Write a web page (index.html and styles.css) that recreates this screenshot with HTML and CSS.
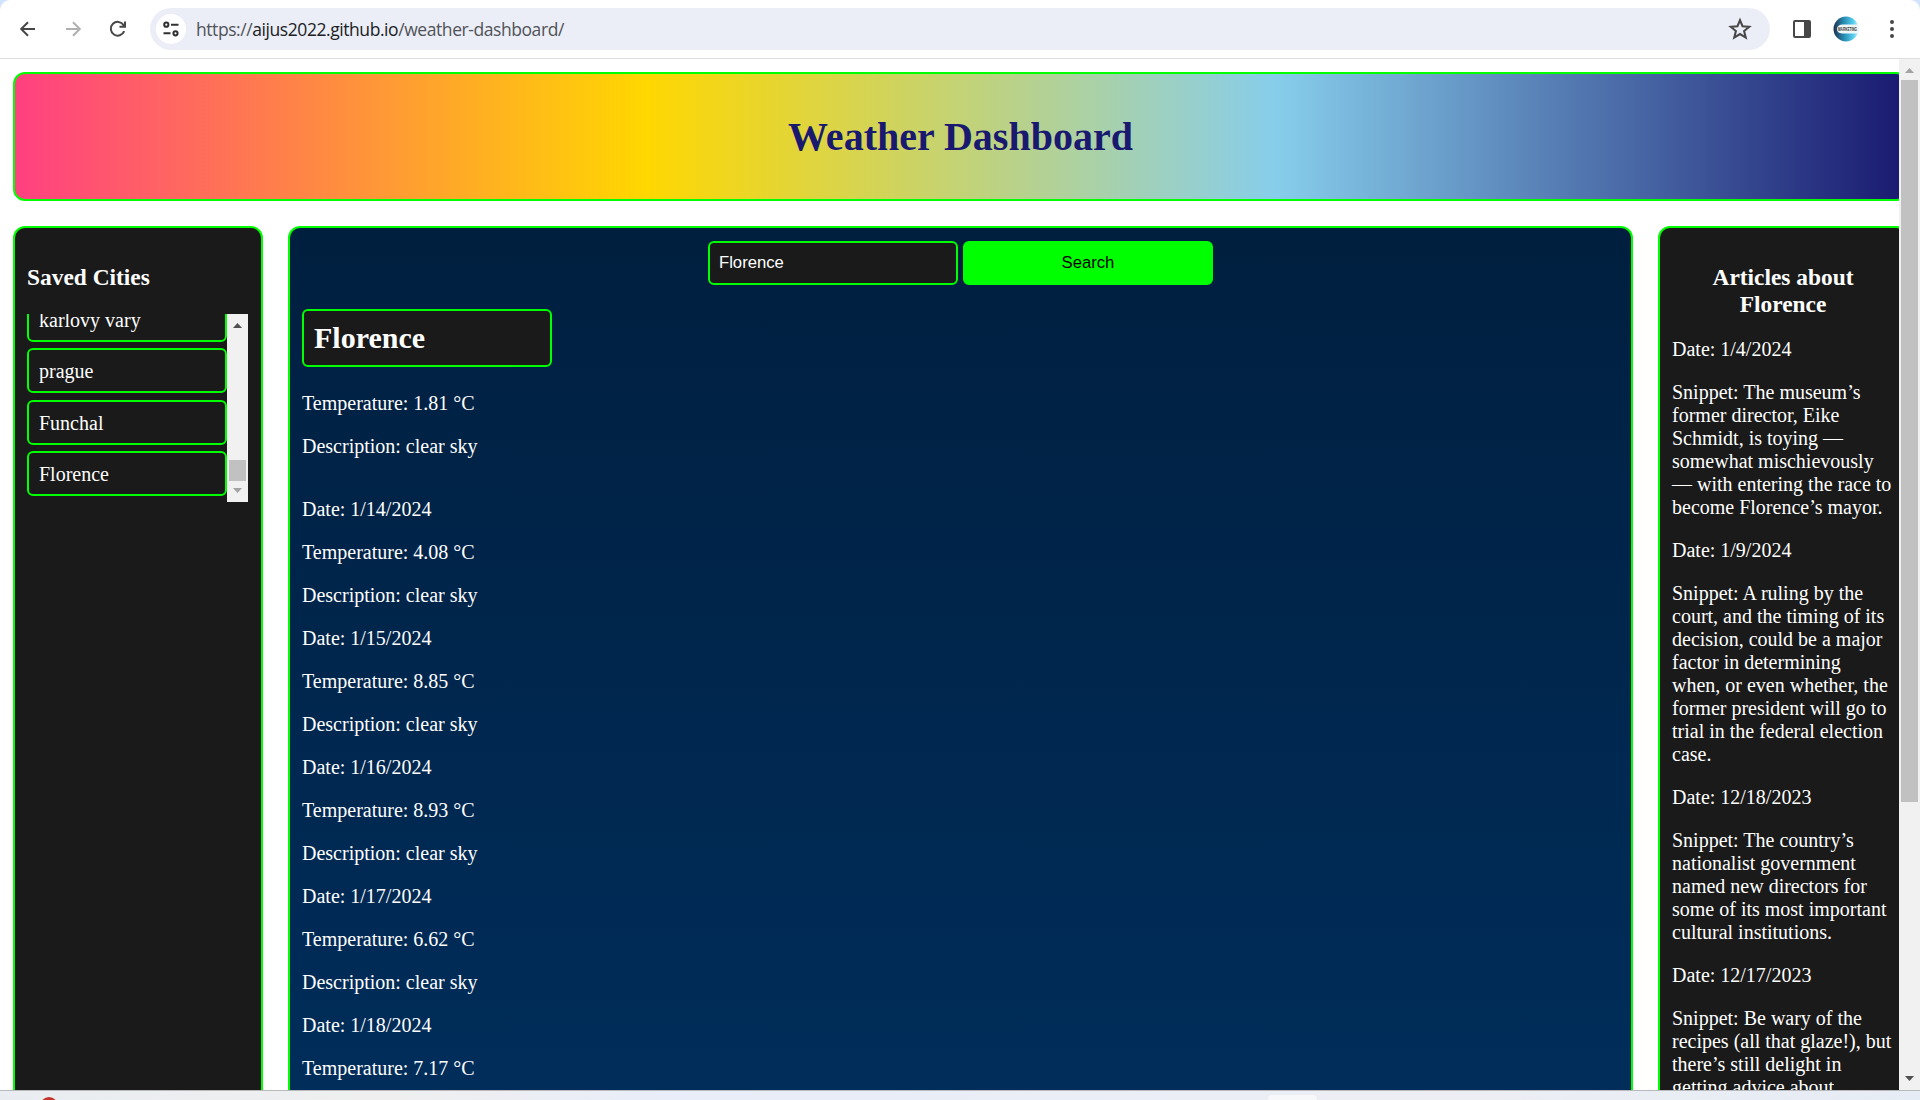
FILE: index.html
```html
<!DOCTYPE html>
<html lang="en">
<head>
<meta charset="utf-8">
<title>Weather Dashboard</title>
<link rel="stylesheet" href="styles.css">
</head>
<body>
<div class="toolbar">
  <svg class="icon back" width="20" height="20" viewBox="0 0 20 20"><path d="M17 10H4M10 3.2 3.2 10l6.8 6.8"/></svg>
  <svg class="icon forward" width="20" height="20" viewBox="0 0 20 20"><path d="M3 10H16M10 3.2 16.8 10 10 16.800"/></svg>
  <svg class="icon reload" width="20" height="20" viewBox="0 0 20 20"><path d="M16.200 12.200A6.900 6.900 0 1 1 15.600 6.100L17 7.800M17 2.500V7.800H11.500"/></svg>
  <div class="address">
    <span class="site-info"><svg width="18" height="18" viewBox="0 0 18 18"><circle cx="4.300" cy="4.700" r="2.100"/><path d="M9 4.700H16.500M1.500 13.300H8.500"/><circle cx="13.500" cy="13.300" r="2.100"/></svg></span>
    <span class="url">https://<b>aijus2022.github.io</b>/weather-dashboard/</span>
    <svg class="icon star" width="24" height="24" viewBox="0 0 20 20"><path d="M10 2.600 12.100 7.700 17.700 8.100 13.400 11.700 14.800 17.100 10 14.200 5.200 17.100 6.600 11.700 2.300 8.100 7.900 7.700Z"/></svg>
  </div>
  <svg class="panel" width="20" height="20" viewBox="0 0 20 20"><rect x="2" y="2" width="16" height="16" rx="1"/><path d="M12 2h6v16h-6z"/></svg>
  <svg class="avatar" width="26" height="26" viewBox="0 0 26 26"><defs><linearGradient id="sea"><stop offset="0" stop-color="#20304c"/><stop offset=".4" stop-color="#2689b0"/><stop offset=".8" stop-color="#58d0f0"/><stop offset="1" stop-color="#c8eef8"/></linearGradient></defs><circle cx="13" cy="13" r="12.500" fill="url(#sea)"/><path d="M25.500 8.500H9Q4 9 4 13t5 4.500h16.500z" fill="#eef6f8"/><text x="5" y="15" textLength="19" lengthAdjust="spacingAndGlyphs">MARKETING</text></svg>
  <svg class="more" width="6" height="20" viewBox="0 0 6 20"><circle cx="3" cy="3" r="2"/><circle cx="3" cy="10" r="2"/><circle cx="3" cy="17" r="2"/></svg>
</div>
<div class="viewport">
  <div class="page">
    <header class="banner"><h1>Weather Dashboard</h1></header>
    <div class="columns">
      <aside class="panel-box saved">
        <h3>Saved Cities</h3>
        <div class="city-list">
          <ul>
            <li>karlovy vary</li>
            <li>prague</li>
            <li>Funchal</li>
            <li>Florence</li>
          </ul>
          <div class="scrollbar small"><i class="up"></i><i class="thumb"></i><i class="down"></i></div>
        </div>
      </aside>
      <main class="panel-box weather">
        <form class="search"><input type="text" value="Florence"><button type="button">Search</button></form>
        <h2>Florence</h2>
        <p>Temperature: 1.81 °C</p>
        <p>Description: clear sky</p>
        <section class="forecast">
          <p>Date: 1/14/2024</p>
          <p>Temperature: 4.08 °C</p>
          <p>Description: clear sky</p>
          <p>Date: 1/15/2024</p>
          <p>Temperature: 8.85 °C</p>
          <p>Description: clear sky</p>
          <p>Date: 1/16/2024</p>
          <p>Temperature: 8.93 °C</p>
          <p>Description: clear sky</p>
          <p>Date: 1/17/2024</p>
          <p>Temperature: 6.62 °C</p>
          <p>Description: clear sky</p>
          <p>Date: 1/18/2024</p>
          <p>Temperature: 7.17 °C</p>
        </section>
      </main>
      <aside class="panel-box articles">
        <h3>Articles about Florence</h3>
        <p>Date: 1/4/2024</p>
        <p>Snippet: The museum’s former director, Eike Schmidt, is toying — somewhat mischievously — with entering the race to become Florence’s mayor.</p>
        <p>Date: 1/9/2024</p>
        <p>Snippet: A ruling by the court, and the timing of its decision, could be a major factor in determining when, or even whether, the former president will go to trial in the federal election case.</p>
        <p>Date: 12/18/2023</p>
        <p>Snippet: The country’s nationalist government named new directors for some of its most important cultural institutions.</p>
        <p>Date: 12/17/2023</p>
        <p>Snippet: Be wary of the recipes (all that glaze!), but there’s still delight in getting advice about</p>
      </aside>
    </div>
  </div>
  <div class="scrollbar large"><i class="up"></i><i class="thumb"></i><i class="down"></i></div>
</div>
<div class="taskbar"><span class="badge"></span><span class="tile"></span></div>
</body>
</html>
```
FILE: styles.css
```css
* { box-sizing: border-box; }
html { background: #d3e3fd; }
body {
  margin: 0;
  height: 1100px;
  overflow: hidden;
  display: flex;
  flex-direction: column;
  font: 20px/23px "Liberation Serif", "Times New Roman", serif;
  color: #fff;
}

/* browser toolbar */
.toolbar {
  flex: none;
  height: 59px;
  display: flex;
  align-items: center;
  padding: 0 25px 1px 18px;
  background: #fff;
  border-bottom: 1px solid #dedfe1;
  border-radius: 10px 10px 0 0;
}
.icon { fill: none; stroke: #474747; stroke-width: 2; flex: none; }
.forward { stroke: #b0b0b0; margin-left: 25px; }
.reload { margin: 0 22px 0 25px; }
.star { stroke-width: 1.7; }
.address {
  flex: 1;
  height: 42px;
  margin-right: 22px;
  padding: 0 18px 0 6px;
  display: flex;
  align-items: center;
  border-radius: 21px;
  background: #ebeef7;
}
.site-info {
  width: 30px;
  height: 30px;
  border-radius: 50%;
  background: #fff;
  display: grid;
  place-items: center;
}
.site-info svg { fill: none; stroke: #303030; stroke-width: 2; }
.url {
  flex: 1;
  margin-left: 10px;
  font: 17.5px/24px "Open Sans", "Noto Sans", sans-serif;
  letter-spacing: -0.43px;
  color: #505357;
}
.url b { font-weight: 400; color: #202124; }
.panel { fill: #474747; margin-right: 21px; }
.panel rect { fill: none; stroke: #474747; stroke-width: 2; }
.avatar { margin-right: 30px; }
.avatar text { font: bold 5px "Liberation Sans", sans-serif; fill: #333; }
.more { fill: #474747; }

/* page area */
.viewport {
  flex: none;
  height: 1031px;
  display: flex;
  overflow: hidden;
  background: #fff;
}
.page {
  width: 1899px;
  flex: none;
  overflow: hidden;
  padding: 13px 0 0 13px;
}
.banner {
  width: 1895px;
  height: 129px;
  border: 2px solid #0f0;
  border-radius: 12px;
  background: linear-gradient(to right, #ff4081, #ffd700, #87ceeb, #191970);
  display: grid;
  place-items: center;
}
h1 { margin: 0; font-size: 40px; line-height: 46px; color: #191970; }
.columns {
  width: 1895px;
  margin-top: 25px;
  height: 1233px;
  display: grid;
  grid-template-columns: 250px 1345px 250px;
  gap: 25px;
}
.panel-box {
  border: 2px solid #0f0;
  border-radius: 12px;
  padding: 12px;
  background: #1a1a1a;
}
h3 { margin: 24px 0 23px; font-size: 23.4px; line-height: 27px; }
p { margin: 0 0 20px; }

.city-list { width: 221px; height: 188px; display: flex; overflow: hidden; }
.city-list ul { list-style: none; margin: -17.300px 0 0; padding: 0; width: 200px; }
.city-list li {
  height: 45px;
  margin-bottom: 6.450px;
  padding: 10px 10px 8px;
  border: 2px solid #0f0;
  border-radius: 6px;
}

.weather { background: linear-gradient(to bottom, #001f3f, #003366); }
.search { display: flex; justify-content: center; gap: 5px; margin: 1px 0 24px; }
.search input, .search button {
  width: 250px;
  height: 44px;
  border: 2px solid #0f0;
  border-radius: 6px;
  padding: 0 9px;
  font: 16.67px "Liberation Sans", Arial, sans-serif;
}
.search input { background: #1a1a1a; color: #fff; }
.search button { background: #0f0; color: #000; }
h2 {
  width: 250px;
  height: 58px;
  margin: 0 0 25px;
  padding: 10px;
  border: 2px solid #0f0;
  border-radius: 6px;
  background: #1a1a1a;
  font-size: 30px;
  line-height: 34px;
}
.forecast { margin-top: 40px; }
.articles h3 { text-align: center; margin-bottom: 20px; }

/* scrollbars */
.scrollbar {
  width: 21px;
  flex: none;
  display: flex;
  flex-direction: column;
  align-items: center;
  background: #f1f1f1;
}
.scrollbar .thumb { width: 17px; background: #c1c1c1; }
.up, .down { width: 9px; height: 5px; background: #505050; }
.up { clip-path: polygon(50% 0, 100% 100%, 0 100%); }
.down { clip-path: polygon(0 0, 100% 0, 50% 100%); }
.small .up { margin-top: 9px; }
.small .thumb { height: 21px; margin: 132px 0 7px; }
.small .down { background: #a3a3a3; }
.large .up { margin-top: 9px; background: #a3a3a3; }
.large .thumb { height: 722px; margin: 7px 0 274px; }

/* desktop taskbar edge */
.taskbar {
  height: 10px;
  display: flex;
  align-items: flex-end;
  overflow: hidden;
  border-top: 1px solid #b8b9bc;
  background: linear-gradient(to right, #e9edf1, #efefef 20%, #e8edf9 35%, #eceef3 75%, #e6ecf5);
}
.badge { flex: none; width: 18px; height: 18px; margin: 0 0 -15px 40px; border-radius: 50%; background: #c3352b; }
.tile { flex: none; width: 49px; height: 5px; margin-left: 1210px; border-radius: 4px 4px 0 0; background: #f7f8fa; }
```
